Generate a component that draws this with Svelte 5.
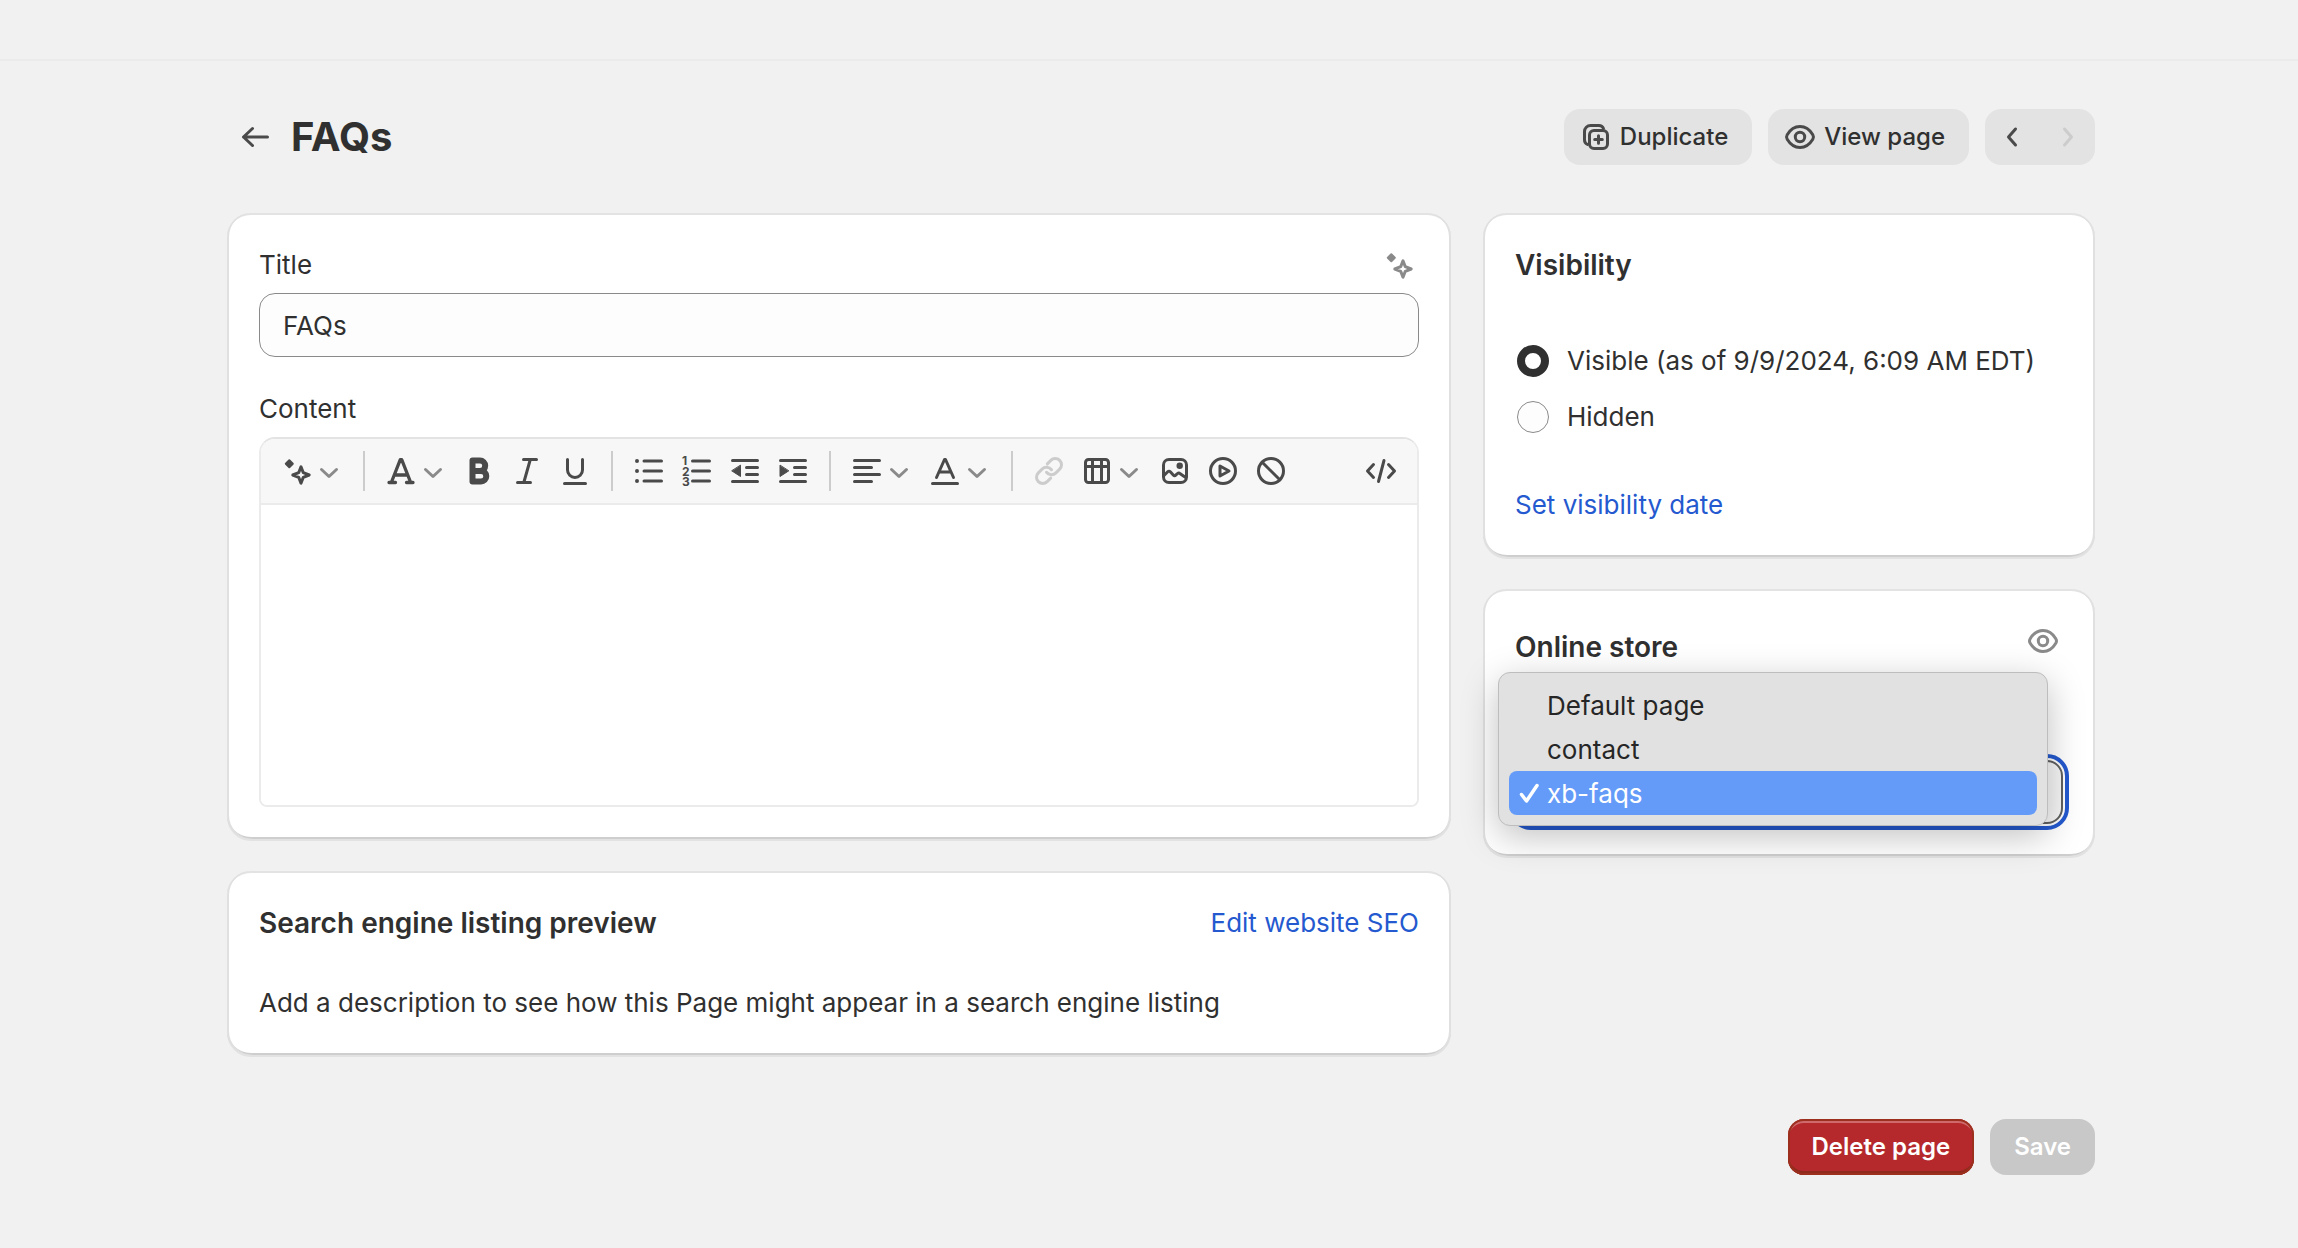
<script lang="ts">
	let title = $state('FAQs');
	let content = $state('');
	let visibility = $state('visible');
	let template = $state('xb-faqs');
	let menuOpen = $state(true);

	const templates = ['Default page', 'contact', 'xb-faqs'];

	type Tool = { icon: string; label: string; menu?: boolean; disabled?: boolean };

	const toolGroups: Tool[][] = [
		[{ icon: 'magic', label: 'Generate text', menu: true }],
		[
			{ icon: 'format', label: 'Formatting', menu: true },
			{ icon: 'bold', label: 'Bold' },
			{ icon: 'italic', label: 'Italic' },
			{ icon: 'underline', label: 'Underline' }
		],
		[
			{ icon: 'bullets', label: 'Bulleted list' },
			{ icon: 'numbers', label: 'Numbered list' },
			{ icon: 'outdent', label: 'Outdent' },
			{ icon: 'indent', label: 'Indent' }
		],
		[
			{ icon: 'align', label: 'Alignment', menu: true },
			{ icon: 'color', label: 'Color', menu: true }
		],
		[
			{ icon: 'link', label: 'Insert link', disabled: true },
			{ icon: 'table', label: 'Insert table', menu: true },
			{ icon: 'image', label: 'Insert image' },
			{ icon: 'video', label: 'Insert video' },
			{ icon: 'clear', label: 'Clear formatting' }
		]
	];

	function pick(name: string) {
		template = name;
		menuOpen = false;
	}
</script>

{#snippet icon(name: string)}
	<svg class="icon" viewBox="0 0 40 40" aria-hidden="true">
		{#if name === 'back'}
			<path d="M32.5 20H8.5M17.5 11.5 8.5 20l9 8.5" />
		{:else if name === 'duplicate'}
			<rect x="13.5" y="13.5" width="18" height="18" rx="4.5" />
			<path d="M11.5 27.5a5 5 0 0 1-3-4.5v-8.5a6 6 0 0 1 6-6H23a5 5 0 0 1 4.5 3M22.5 18.7v7.6M18.7 22.5h7.6" />
		{:else if name === 'eye'}
			<path d="M7.2 22.3a4.5 4.5 0 0 1 0-4.6C10 13 14.5 9.5 20 9.5s10 3.5 12.8 8.2a4.5 4.5 0 0 1 0 4.6C30 27 25.5 30.5 20 30.5S10 27 7.2 22.3z" />
			<circle cx="20" cy="20" r="4.7" />
		{:else if name === 'prev'}
			<path d="m22.5 12-7 8 7 8" />
		{:else if name === 'next'}
			<path d="m16.5 12 7 8-7 8" />
		{:else if name === 'magic'}
			<path class="fill" d="m12.3 9.2 3.5 3.5-3.5 3.5-3.5-3.5z" />
			<path d="m24 15.8 2.3 5.9 5.9 2.3-5.9 2.3-2.3 5.9-2.3-5.9-5.9-2.3 5.9-2.3z" />
		{:else if name === 'format'}
			<path class="strong" d="M10.5 31 19.3 8.7h1.4L29.5 31M14 24h12M8 31.5h6.5M25.5 31.5H32" />
		{:else if name === 'bold'}
			<path class="heavy" d="M13.5 9.5H21a5.2 5.2 0 0 1 0 10.4h-7.5zM13.5 19.9H22a5.3 5.3 0 0 1 0 10.6h-8.5z" />
		{:else if name === 'italic'}
			<path d="M16.5 8.5h13M10.5 31.5h13M23.3 8.5l-6.5 23" />
		{:else if name === 'underline'}
			<path d="M12.5 8.5V19a7.5 7.5 0 0 0 15 0V8.5M9.5 32.5h21" />
		{:else if name === 'bullets'}
			<path d="M15 10h17.5M15 20h17.5M15 30h17.5" />
			<path class="dots" d="M8 10h0M8 20h0M8 30h0" />
		{:else if name === 'numbers'}
			<path d="M15.5 10h17M15.5 20h17M15.5 30h17" />
			<text x="5" y="14">1</text>
			<text x="5" y="24.5">2</text>
			<text x="5" y="35">3</text>
		{:else if name === 'outdent'}
			<path d="M7.5 9.5h25M21.5 16.5h11M21.5 23.5h11M7.5 30.5h25" />
			<path class="solid" d="M15.5 14.5v11L7 20z" />
		{:else if name === 'indent'}
			<path d="M7.5 9.5h25M21.5 16.5h11M21.5 23.5h11M7.5 30.5h25" />
			<path class="solid" d="M7 14.5v11l8.5-5.5z" />
		{:else if name === 'align'}
			<path d="M7.5 9.5h25M7.5 16.5h17M7.5 23.5h25M7.5 30.5h17" />
		{:else if name === 'color'}
			<path d="M11.5 26.5 19.5 8.5h1l8 18M14 21h12M7.5 32.5h25" />
		{:else if name === 'link'}
			<path d="M17.5 21.25a6.25 6.25 0 0 0 9.42.68l3.75-3.75a6.25 6.25 0 0 0-8.84-8.84l-3.5 3.5M22.5 18.75a6.25 6.25 0 0 0-9.42-.68l-3.75 3.75a6.25 6.25 0 0 0 8.84 8.84l3.5-3.5" />
		{:else if name === 'table'}
			<rect x="8.5" y="8.5" width="23" height="23" rx="3" />
			<path d="M8.5 15.5h23M15.5 8.5v23M24.5 8.5v23" />
		{:else if name === 'image'}
			<rect x="8.5" y="8.5" width="23" height="23" rx="5.5" />
			<circle class="dot" cx="24.7" cy="14.7" r="3.2" />
			<path d="m9 24.5 3.7-3.8a1.8 1.8 0 0 1 2.6 0l3.2 3.5a1.5 1.5 0 0 0 2.2 0l1.7-1.5a2 2 0 0 1 2.8 0l5.5 3.8" />
		{:else if name === 'video'}
			<circle cx="20" cy="20" r="12.5" />
			<path d="M17 15v10l9-5z" />
		{:else if name === 'clear'}
			<circle cx="20" cy="20" r="12.5" />
			<path d="m11.2 11.2 17.6 17.6" />
		{:else if name === 'code'}
			<path d="M12.5 13.5 6.5 20l6 6.5M27.5 13.5l6 6.5-6 6.5M23 9.5l-5.5 21" />
		{/if}
	</svg>
{/snippet}

<div class="topbar"></div>

<main>
	<header>
		<button class="back" aria-label="Back to pages">{@render icon('back')}</button>
		<h1>FAQs</h1>
		<div class="actions">
			<button class="btn with-icon">{@render icon('duplicate')}Duplicate</button>
			<button class="btn with-icon">{@render icon('eye')}View page</button>
			<div class="pager">
				<button aria-label="Previous page">{@render icon('prev')}</button>
				<button aria-label="Next page" disabled>{@render icon('next')}</button>
			</div>
		</div>
	</header>

	<div class="columns">
		<div class="column">
			<section class="card">
				<div class="label-row">
					<label for="title">Title</label>
					<button class="subdued" aria-label="Generate title">{@render icon('magic')}</button>
				</div>
				<input id="title" class="text-field" type="text" bind:value={title} />

				<label class="content-label" for="content">Content</label>
				<div class="editor">
					<div class="toolbar">
						{#each toolGroups as group, i}
							{#if i > 0}
								<span class="divider"></span>
							{/if}
							{#each group as tool}
								<button class="tool" class:menu={tool.menu} disabled={tool.disabled} aria-label={tool.label}>
									{@render icon(tool.icon)}
									{#if tool.menu}
										<svg class="chevron" viewBox="0 0 24 24" aria-hidden="true">
											<path d="m4.5 10.5 7.5 7 7.5-7" />
										</svg>
									{/if}
								</button>
							{/each}
						{/each}
						<span class="spacer"></span>
						<button class="tool" aria-label="Show HTML">{@render icon('code')}</button>
					</div>
					<textarea id="content" bind:value={content}></textarea>
				</div>
			</section>

			<section class="card">
				<div class="seo-head">
					<h2>Search engine listing preview</h2>
					<a href="#seo">Edit website SEO</a>
				</div>
				<p>Add a description to see how this Page might appear in a search engine listing</p>
			</section>
		</div>

		<div class="column">
			<section class="card">
				<h2>Visibility</h2>
				<div class="radios">
					<label>
						<input type="radio" name="visibility" value="visible" bind:group={visibility} />
						Visible (as of 9/9/2024, 6:09 AM EDT)
					</label>
					<label>
						<input type="radio" name="visibility" value="hidden" bind:group={visibility} />
						Hidden
					</label>
				</div>
				<a class="date-link" href="#date">Set visibility date</a>
			</section>

			<section class="card">
				<div class="store-head">
					<h2>Online store</h2>
					<button class="subdued" aria-label="Preview">{@render icon('eye')}</button>
				</div>
				<div class="select-wrap">
					<select class:focused={menuOpen} aria-label="Theme template" bind:value={template}>
						{#each templates as name}
							<option value={name}>{name}</option>
						{/each}
					</select>
					{#if menuOpen}
						<div class="options" role="listbox" aria-label="Theme template">
							{#each templates as name}
								<button class="option" class:selected={name === template} role="option" aria-selected={name === template} onclick={() => pick(name)}>
									<svg class="check" viewBox="0 0 24 24" aria-hidden="true">
										{#if name === template}
											<path d="m4.5 12.5 5 6.5L20 3.5" />
										{/if}
									</svg>
									{name}
								</button>
							{/each}
						</div>
					{/if}
				</div>
			</section>
		</div>
	</div>

	<footer>
		<button class="btn danger">Delete page</button>
		<button class="btn save" disabled>Save</button>
	</footer>
</main>

<style>
	:global(body) {
		background: #f1f1f1;
		color: #303030;
		font-family: Inter, "Liberation Sans", sans-serif;
		font-size: 26px;
		line-height: 40px;
	}

	button {
		font: inherit;
		color: inherit;
		background: none;
		border: none;
		padding: 0;
		cursor: pointer;
	}

	h1,
	h2,
	p {
		margin: 0;
	}

	h1 {
		font-size: 40px;
		font-weight: 700;
		line-height: 56px;
	}

	h2 {
		font-size: 28px;
		font-weight: 600;
		line-height: 40px;
	}

	a {
		color: #2459cf;
		text-decoration: none;
	}

	.icon {
		display: block;
		flex-shrink: 0;
		width: 40px;
		height: 40px;
		color: #4a4a4a;
		fill: none;
		stroke: currentColor;
		stroke-width: 3;
		stroke-linecap: round;
		stroke-linejoin: round;
	}

	.icon .fill {
		fill: currentColor;
		stroke-width: 2;
	}

	.icon .solid {
		fill: currentColor;
		stroke-width: 1;
	}

	.icon .dot {
		fill: currentColor;
		stroke: none;
	}

	.icon .dots {
		stroke-width: 4;
	}

	.icon .strong {
		stroke-width: 3.3;
	}

	.icon .heavy {
		stroke-width: 6;
	}

	.icon text {
		fill: currentColor;
		stroke: none;
		font-size: 12px;
		font-weight: 700;
	}

	.topbar {
		height: 59px;
		border-bottom: 2px solid #ebebeb;
	}

	main {
		padding: 48px 203px 72px 227px;
	}

	header {
		display: flex;
		align-items: center;
		margin-bottom: 48px;
	}

	.back {
		width: 56px;
		height: 56px;
		padding: 8px;
		margin-right: 8px;
	}

	.actions {
		display: flex;
		gap: 16px;
		margin-left: auto;
	}

	.btn {
		display: flex;
		align-items: center;
		gap: 4px;
		height: 56px;
		padding: 0 24px;
		border-radius: 16px;
		background: #e3e3e3;
		font-size: 24px;
		font-weight: 500;
	}

	.with-icon {
		padding-left: 12px;
	}

	.pager {
		display: flex;
		height: 56px;
		border-radius: 16px;
		background: #e3e3e3;
	}

	.pager button {
		width: 55px;
		padding: 0 8px;
	}

	button:disabled .icon {
		color: #cccccc;
	}

	.columns {
		display: grid;
		grid-template-columns: 2fr 1fr;
		gap: 32px;
		align-items: start;
	}

	.column {
		display: grid;
		gap: 32px;
		min-width: 0;
	}

	.card {
		padding: 32px;
		border-radius: 24px;
		background: #fff;
		box-shadow:
			inset 2px 0 0 #e0e0e0,
			inset -2px 0 0 #e0e0e0,
			inset 0 -2px 0 #cecece,
			inset 0 2px 0 #e3e3e3,
			0 2px 0 #e2e2e2;
	}

	.label-row {
		display: flex;
		justify-content: space-between;
		margin-bottom: 8px;
	}

	.subdued .icon {
		color: #8a8a8a;
	}

	.text-field {
		display: block;
		box-sizing: border-box;
		width: 100%;
		height: 64px;
		padding: 0 23px;
		border: 1px solid #8a8a8a;
		border-radius: 16px;
		background: #fdfdfd;
		color: inherit;
		font: inherit;
	}

	.content-label {
		display: block;
		margin: 32px 0 8px;
	}

	.editor {
		overflow: hidden;
		border: 2px solid #ebebeb;
		border-top-color: #e3e3e3;
		border-radius: 16px 16px 8px 8px;
	}

	.toolbar {
		display: flex;
		align-items: center;
		height: 64px;
		padding: 0 12px;
		border-bottom: 2px solid #ebebeb;
		background: #f7f7f7;
	}

	.tool {
		display: flex;
		align-items: center;
		width: 48px;
		height: 56px;
		padding: 0 4px;
	}

	.tool.menu {
		width: 78px;
	}

	.chevron {
		width: 24px;
		height: 24px;
		fill: none;
		stroke: #8a8a8a;
		stroke-width: 3;
		stroke-linecap: round;
		stroke-linejoin: round;
	}

	.divider {
		width: 2px;
		height: 40px;
		margin: 0 12px;
		background: #cccccc;
	}

	.spacer {
		flex: 1;
	}

	textarea {
		display: block;
		box-sizing: border-box;
		width: 100%;
		height: 300px;
		padding: 24px;
		border: none;
		outline: none;
		resize: none;
		background: #fff;
		color: inherit;
		font: inherit;
	}

	.seo-head {
		display: flex;
		justify-content: space-between;
		margin-bottom: 40px;
	}

	.radios {
		display: grid;
		gap: 16px;
		margin: 56px 0 48px;
	}

	.radios label {
		display: flex;
		align-items: center;
		gap: 18px;
	}

	input[type='radio'] {
		appearance: none;
		box-sizing: border-box;
		flex-shrink: 0;
		width: 32px;
		height: 32px;
		margin: 0 0 0 2px;
		border: 1px solid #8a8a8a;
		border-radius: 50%;
		background: #fdfdfd;
	}

	input[type='radio']:checked {
		border: 8px solid #303030;
		background: #fff;
	}

	.date-link {
		display: block;
	}

	.store-head {
		display: flex;
		align-items: flex-start;
		justify-content: space-between;
		margin-bottom: 87px;
	}

	.store-head h2 {
		line-height: 52px;
	}

	.select-wrap {
		position: relative;
	}

	select {
		display: block;
		appearance: none;
		box-sizing: border-box;
		width: 100%;
		height: 64px;
		padding: 0 24px;
		border: 2px solid #616161;
		border-radius: 16px;
		background: #f7f7f7;
		color: inherit;
		font: inherit;
	}

	select.focused {
		outline: 4px solid #2459cf;
		outline-offset: 2px;
	}

	.options {
		position: absolute;
		top: -88px;
		left: -17px;
		right: 15px;
		padding: 10px;
		border: 1px solid #bdbdbd;
		border-radius: 12px;
		background: #e1e1e1;
		box-shadow: 0 10px 36px rgba(0, 0, 0, 0.25);
	}

	.option {
		display: flex;
		align-items: center;
		gap: 6px;
		width: 100%;
		height: 44px;
		padding: 2px 8px 0;
		border-radius: 8px;
		color: #262626;
	}

	.option.selected {
		background: #649bf8;
		color: #fff;
	}

	.check {
		width: 24px;
		height: 24px;
		fill: none;
		stroke: currentColor;
		stroke-width: 3.5;
		stroke-linecap: round;
		stroke-linejoin: round;
	}

	footer {
		display: flex;
		justify-content: flex-end;
		gap: 16px;
		margin-top: 64px;
	}

	.danger,
	.save {
		color: #fff;
		font-weight: 600;
	}

	.danger {
		background: #b5292d;
		box-shadow:
			inset 0 0 0 2px #9c2f1e,
			inset 0 -4px 0 #8e2b1d,
			inset 0 4px 0 #cf6a6c;
	}

	.save {
		background: #c8c8c8;
	}
</style>
